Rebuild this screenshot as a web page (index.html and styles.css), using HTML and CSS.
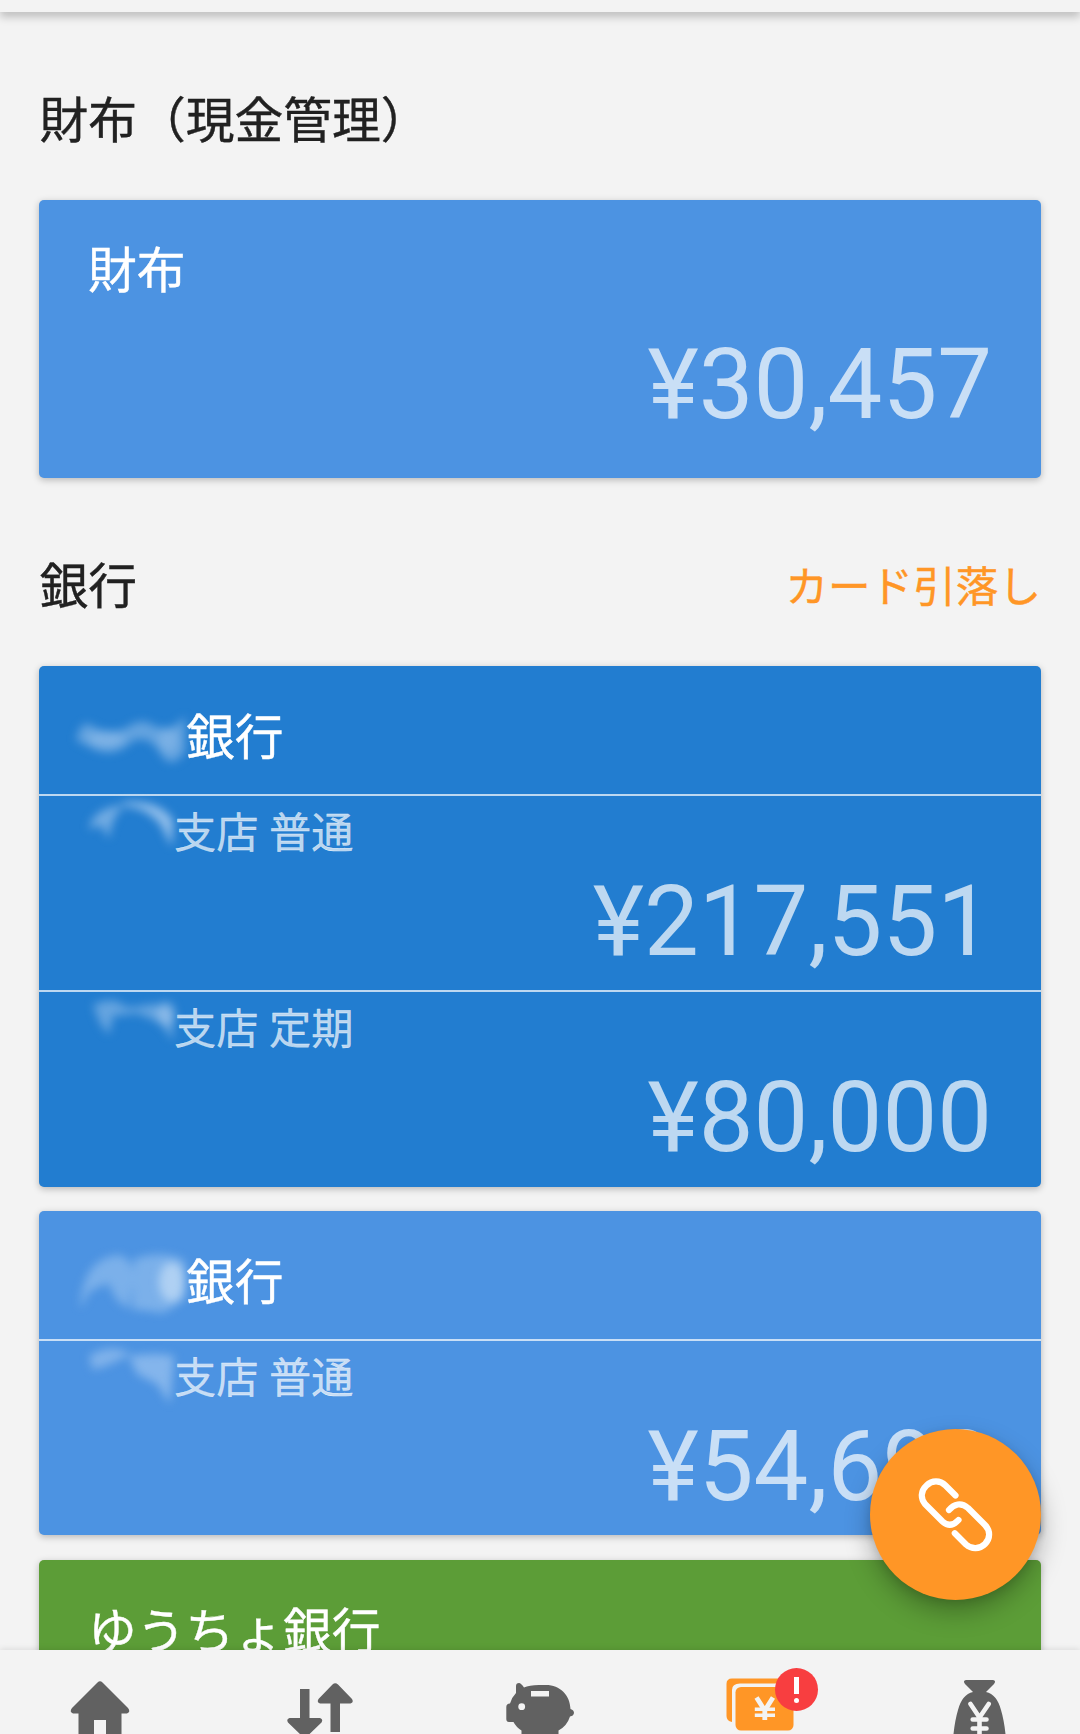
FILE: index.html
```html
<!DOCTYPE html>
<html lang="ja">
<head>
    <meta charset="UTF-8">
    <meta name="viewport" content="width=device-width, initial-scale=1.0">
    <title>口座</title>
    <link rel="stylesheet" href="styles.css">
</head>
<body>

    <header class="topbar"></header>

    <main class="content">
        <div class="section-head">
            <h2>財布（現金管理）</h2>
        </div>
        <section class="card light wallet">
            <h3 class="name">財布</h3>
            <p class="amount">¥30,457</p>
        </section>

        <div class="section-head">
            <h2>銀行</h2>
            <a class="link">カード引落し</a>
        </div>
        <div class="list">
            <section class="card blue">
                <h3 class="name"><svg class="mask" viewBox="0 0 98 70"><g fill="#8fbdea"><path d="M-12 36 Q-6 14 4 22 Q20 32 38 24 Q54 12 66 22 Q84 30 97 12 L97 48 Q84 66 74 52 Q64 32 46 36 Q28 54 8 46 Z" opacity=".6"/><ellipse cx="18" cy="35" rx="18" ry="8" opacity=".6"/><ellipse cx="80" cy="36" rx="10" ry="12" opacity=".5"/></g></svg>銀行</h3>
                <div class="account">
                    <p class="branch"><svg class="mask" viewBox="0 -7 85 50"><g fill="#9dc5ed"><path d="M0 18 Q4 -4 36 -6 Q22 6 20 28 L12 14 Z" opacity=".65"/><path d="M34 -9 Q70 -12 84 9 L83 36 L72 14 Q56 -5 34 -5 Z" opacity=".9"/></g></svg>支店 普通</p>
                    <p class="amount">¥217,551</p>
                </div>
                <div class="account">
                    <p class="branch"><svg class="mask" viewBox="0 -7 85 50"><g fill="#9dc5ed"><path d="M4 -2 Q26 -12 36 0 L48 0 Q75 -8 84 8 L84 34 L72 16 L48 6 L24 9 L20 28 L11 16 Z" opacity=".55"/><ellipse cx="77" cy="7" rx="9" ry="12" opacity=".65"/></g></svg>支店 定期</p>
                    <p class="amount">¥80,000</p>
                </div>
            </section>

            <section class="card light">
                <h3 class="name"><svg class="mask" viewBox="0 0 98 70"><g fill="#bcd8f5"><path d="M-8 60 Q-6 8 32 6 Q48 12 45 34 L40 60 L28 50 L20 34 L2 42 Z" opacity=".42"/><path d="M46 10 Q76 0 97 12 L97 50 L76 64 L44 60 Z" opacity=".42"/><ellipse cx="84" cy="33" rx="13" ry="20" opacity=".8"/></g></svg>銀行</h3>
                <div class="account">
                    <p class="branch"><svg class="mask" viewBox="0 -7 85 50"><g fill="#b3d2f4"><path d="M0 0 Q22 -14 42 -2 L22 8 L4 14 Z" opacity=".5"/><path d="M40 0 Q70 -4 85 0 L81 48 L68 28 L48 18 Z" opacity=".55"/></g></svg>支店 普通</p>
                    <p class="amount">¥54,690</p>
                </div>
            </section>

            <section class="card green">
                <h3 class="name">ゆうちょ銀行</h3>
            </section>
        </div>
    </main>

    <!-- 連携ボタン -->
    <button class="fab" aria-label="連携">
        <svg viewBox="0 0 171 171">
            <g fill="none" stroke="#fff" stroke-width="6.2" stroke-linecap="round" stroke-linejoin="round">
                <path d="M85.5 66.5 L75.5 56.5 C70 51 62 51 56.5 56.5 C50.5 62 50.5 69.500 55 75 L72.500 92.500 C77.500 97 83 97 88.500 91"/>
                <path d="M79 81 C84 75 91 73 98 79 L115 96 C120.500 101.500 120.500 109.500 115 115 C109.500 120.500 101.500 120.500 96 115.500 L84.800 104.300"/>
            </g>
        </svg>
    </button>

    <nav class="tabs">
        <a class="tab">
            <svg viewBox="0 0 100 84">
                <path fill="#616161" d="M47.500 32.500 Q50 30 52.500 32.500 L78 58 Q81 62 77 63.500 H71.500 V84 H56 V70 H44 V84 H28.500 V63.500 H23 Q19 62 22 58 Z"/>
            </svg>
        </a>
        <a class="tab">
            <svg viewBox="0 0 100 84">
                <g fill="#616161">
                    <path d="M30 39 H39.500 V68 H50 Q53.500 69 51.500 72.500 L37.500 86 H32 L18 72.500 Q16 69 19.500 68 H30 Z"/>
                    <path d="M60.500 82 V53.500 H50 Q46.500 52.500 48.500 49 L62.500 34.500 Q65.200 32 68 34.500 L82 49 Q84 52.500 80.500 53.500 H70 V82 Z"/>
                </g>
            </svg>
        </a>
        <a class="tab">
            <svg viewBox="0 0 100 84">
                <path fill="#616161" d="M26 36 Q26 33 29 33 Q31 33 34 37.500 Q39 35 49 35 H56 C70 35 80 45 80.500 59 Q84 60 84 63 Q83.500 66 80 66.500 Q77 76 68.500 80.500 V84 H31.500 V80.500 Q26 77 23.500 72 H19 Q16.300 72 16.300 69 V57 Q16.300 53.500 20 53.500 Q22 47 26 43 Z"/>
                <rect x="41" y="41" width="18" height="5.500" fill="#f3f3f3"/>
                <circle cx="31.700" cy="56.700" r="3.400" fill="#f3f3f3"/>
            </svg>
        </a>
        <a class="tab active">
            <svg viewBox="0 0 100 84">
                <path fill="#ff9626" d="M16.500 34 Q16.500 28.500 22 28.500 H68 V33.500 H30 Q22 33.500 22 40 V72 Q16.500 71 16.500 66 Z"/>
                <rect x="25.500" y="37" width="58" height="43.500" rx="5.500" fill="#ff9626"/>
                <g fill="none" stroke="#f3f3f3" stroke-width="4.800">
                    <path d="M46.500 47.500 L54.800 60.500 L63 47.500 M54.800 60 V70"/>
                    <path stroke-width="3.600" d="M44.800 59.300 H65 M44.800 65.200 H65"/>
                </g>
            </svg>
            <span class="badge"><i></i></span>
        </a>
        <a class="tab">
            <svg viewBox="0 0 100 84">
                <path fill="#616161" d="M36 30 H63 Q66.500 30.500 64 34 L56 42 Q67 44.500 71 60 Q74 70 75.500 84 H23.500 Q25 70 28 60 Q32 44.500 43 42 L35 34 Q32.500 30.500 36 30 Z"/>
                <path fill="none" stroke="#f3f3f3" stroke-width="4.600" stroke-linecap="round" stroke-linejoin="round" d="M40.500 54 L49.500 67.500 L58.700 54 M49.500 67 V86 M42.700 69.500 H56.500 M42.700 78.500 H56.500"/>
            </svg>
        </a>
    </nav>

</body>
</html>
```
FILE: styles.css
```css
* {
    box-sizing: border-box;
    margin: 0;
    padding: 0;
}
body {
    display: flex;
    flex-direction: column;
    height: 1734px;
    overflow: hidden;
    background: #f3f3f3;
    color: #212121;
    font-family: Roboto, "Noto Sans CJK JP", sans-serif;
}
h2, h3 {
    font-size: 48.75px;
    font-weight: 400;
    line-height: 70px;
    -webkit-text-stroke: 0.4px;
}
.topbar {
    flex: none;
    height: 11.5px;
    background: #f3f3f3;
    box-shadow: 0 5px 9px rgba(0, 0, 0, 0.22);
    z-index: 1;
}
.content {
    flex: 1;
    min-height: 0;
    overflow: hidden;
    padding: 0.5px 39px 0;
}
.section-head {
    display: flex;
    justify-content: space-between;
    height: 188.4px;
    padding-top: 74.5px;
}
.section-head h2 {
    padding-left: 0.5px;
}
.link {
    color: #ff9626;
    font-size: 42.6px;
    line-height: 69px;
    -webkit-text-stroke: 0.4px;
}
.list {
    display: flex;
    flex-direction: column;
    gap: 24.3px;
}
.card {
    border-radius: 5px;
    color: #fff;
    box-shadow: 0 2px 7px rgba(0, 0, 0, 0.25);
}
.light {
    background: #4c93e2;
}
.blue {
    background: #227dd0;
}
.green {
    background: #5c9d37;
    height: 300px;
}
.name {
    height: 127.5px;
    padding: 38px 49px 0;
}
.wallet {
    height: 277.7px;
}
.wallet .name {
    height: 122.5px;
    padding-top: 37px;
}
.account {
    height: 196.5px;
    border-top: 2px solid rgba(255, 255, 255, 0.7);
}
.branch {
    height: 64px;
    padding: 8px 50px 0;
    font-size: 42.25px;
    line-height: 60px;
    color: rgba(255, 255, 255, 0.7);
    -webkit-text-stroke: 0.3px;
}
.amount {
    padding-right: 49px;
    font-size: 97.5px;
    line-height: 124px;
    text-align: right;
    color: rgba(255, 255, 255, 0.7);
}

/* 伏せた名前 */
.mask {
    display: inline-block;
    width: 98px;
    height: 70px;
    overflow: visible;
    vertical-align: top;
    filter: blur(5px);
}
.branch .mask {
    width: 85px;
    height: 50px;
}

.fab {
    position: absolute;
    left: 870px;
    top: 1429px;
    width: 171px;
    height: 171px;
    border: none;
    border-radius: 50%;
    background: #ff9626;
    box-shadow: 0 12px 26px rgba(0, 0, 0, 0.28), 0 3px 8px rgba(0, 0, 0, 0.1);
}
.fab svg {
    display: block;
}
.tabs {
    flex: none;
    display: flex;
    justify-content: center;
    height: 84px;
    background: #f3f3f3;
    box-shadow: 0 -1px 6px rgba(0, 0, 0, 0.1);
    z-index: 1;
}
.tab {
    flex: none;
    position: relative;
    display: flex;
    justify-content: center;
    width: 220px;
}
.tab svg {
    width: 100px;
    height: 84px;
}
.badge {
    position: absolute;
    left: 125px;
    top: 18px;
    display: flex;
    flex-direction: column;
    align-items: center;
    width: 43px;
    height: 43px;
    padding-top: 9px;
    border-radius: 50%;
    background: #f83e40;
}
/* 感嘆符 */
.badge i {
    width: 5px;
    height: 17px;
    background: #fff;
}
.badge::after {
    content: "";
    width: 5px;
    height: 5px;
    margin-top: 4px;
    border-radius: 50%;
    background: #fff;
}
```
